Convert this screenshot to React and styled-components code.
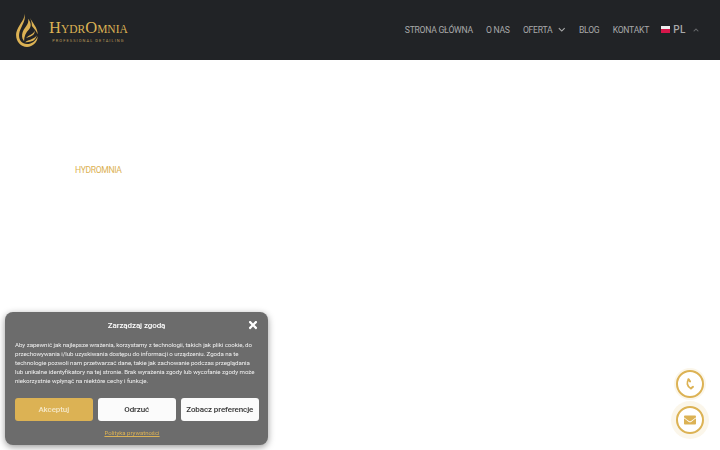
import React from "react"
import styled, { createGlobalStyle } from "styled-components"
import { FaEnvelope, FaChevronDown, FaChevronUp, FaTimes } from "react-icons/fa"

const gold = "#dcb254"

const Global = createGlobalStyle`
  html, body { margin: 0; padding: 0; background: #fff; }
  body { font-family: Roboto, "Liberation Sans", sans-serif; width: 720px; height: 450px; overflow: hidden; }
  * { box-sizing: border-box; }
`

const Header = styled.header`
  height: 60px;
  background: #212326;
  display: flex;
  align-items: center;
  justify-content: space-between;
  padding: 0 21px 0 15px;
`

const Brand = styled.div`
  display: flex;
  align-items: center;
  gap: 10px;
`

const BrandText = styled.div`
  display: flex;
  flex-direction: column;
  align-items: center;
  color: ${gold};
  margin-top: 3px;
`

const BrandName = styled.div`
  font-family: "Liberation Serif", serif;
  line-height: 15px;
  white-space: nowrap;
  b { font-weight: 400; font-size: 16.5px; }
  small { font-size: 11.5px; }
`

const BrandSub = styled.div`
  font-size: 4px;
  line-height: 6px;
  letter-spacing: 1.05px;
  margin-top: 1px;
  white-space: nowrap;
  color: #b9995a;
`

const Nav = styled.nav`
  display: flex;
  align-items: center;
  color: #a8a9aa;
  font-size: 8.6px;
  letter-spacing: -0.25px;
  margin-top: -1px;
`

const NavItem = styled.a`
  display: flex;
  align-items: center;
  gap: 6px;
  margin-right: 13.2px;
  white-space: nowrap;
  svg { font-size: 7.5px; }
`

const Lang = styled.div`
  display: flex;
  align-items: center;
  gap: 3px;
  font-size: 10px;
  font-weight: 500;
  letter-spacing: 0.5px;
  margin-left: -1px;
`

const Flag = styled.span`
  width: 9px;
  height: 7px;
  display: block;
  background: linear-gradient(#eeeeee 50%, #d6164a 50%);
`

const Caret = styled(FaChevronUp)`
  font-size: 6px;
  margin-left: 4px;
  color: #66686a;
`

const Main = styled.main`
  padding: 104px 75px 0;
`

const Crumb = styled.a`
  display: block;
  color: ${gold};
  font-size: 8.6px;
  letter-spacing: -0.35px;
  line-height: 12px;
`

const Consent = styled.div`
  position: fixed;
  left: 5px;
  bottom: 5px;
  width: 263px;
  height: 133px;
  background: #6c6c6c;
  border-radius: 8px;
  box-shadow: 0 2px 7px rgba(0, 0, 0, 0.4);
  padding: 0 10px;
  color: #fff;
`

const ConsentHead = styled.div`
  height: 26px;
  display: flex;
  align-items: center;
  justify-content: center;
  position: relative;
  font-size: 8px;
  letter-spacing: -0.1px;
  font-weight: 500;
`

const Close = styled(FaTimes)`
  position: absolute;
  right: -1px;
  top: 7px;
  font-size: 12px;
`

const ConsentText = styled.p`
  margin: 3px 0 0;
  font-size: 6.15px;
  letter-spacing: -0.05px;
  line-height: 9px;
  height: 45px;
  color: #f0f0f0;
  white-space: nowrap;
`

const Actions = styled.div`
  display: grid;
  grid-template-columns: repeat(3, 77.5px);
  gap: 5.5px;
  margin-top: 12px;
`

const Action = styled.button`
  height: 23px;
  border: 0;
  border-radius: 3px;
  padding: 0;
  font-family: inherit;
  font-size: 8px;
  letter-spacing: -0.1px;
  font-weight: 500;
  background: ${p => (p.$accept ? gold : "#fbfbfb")};
  color: ${p => (p.$accept ? "#f4e6c4" : "#333")};
`

const Policy = styled.a`
  display: block;
  text-align: center;
  margin-top: 7px;
  padding-right: 9px;
  font-size: 6px;
  line-height: 9px;
  color: ${gold};
  text-decoration: underline;
`

const Floats = styled.div`
  position: fixed;
  right: 16px;
  bottom: 16px;
  display: flex;
  flex-direction: column;
  gap: 8px;
`

const FloatBtn = styled.a`
  width: 28px;
  height: 28px;
  border-radius: 50%;
  border: 2px solid ${gold};
  background: #fff;
  color: ${gold};
  display: flex;
  align-items: center;
  justify-content: center;
  font-size: ${p => p.$size}px;
  box-shadow: 0 0 0 ${p => p.$halo}px rgba(220, 178, 84, 0.12);
`

const Drop = () => (
  <svg width="24" height="34" viewBox="0 0 24 35" fill={gold}>
    <path d="M9 0C11 6 3 12 1 20C-.5 28 5 35 12 35C18 35 23 30 23 24C21 29 17 32 12 32C6 32 3 27 4 21C5 14 12 8 9 0Z" />
    <path d="M13 6C15 12 8 15 7 22C6.5 26 8 28 9 29C9 24 11 20 14 17C17 14 16 9 13 6Z" />
    <path d="M15 5C18 11 23 15 23 22C21 17 18 15 17 13C17 10 16 7 15 5Z" />
    <path d="M20 18C19 22 14 22 11 26C15 24 20 24 20 18Z" />
    <path d="M22 23C20 27 15 27 10 30C15 30.5 21 29 22 23Z" />
  </svg>
)

const Handset = () => (
  <svg width="10" height="12" viewBox="0 0 10 12" fill="none" stroke={gold} strokeLinecap="round">
    <path d="M3.6 1.6C1.4 4 1.8 8 5.6 10.4" strokeWidth="1.7" />
    <path d="M3.4 1.2L5 3.4" strokeWidth="2" />
    <path d="M6 10.4L8 8.8" strokeWidth="2" />
  </svg>
)

export default function App() {
  return (
    <>
      <Global />
      <Header>
        <Brand>
          <Drop />
          <BrandText>
            <BrandName>
              <b>H</b><small>YDR</small><b>O</b><small>MNIA</small>
            </BrandName>
            <BrandSub>PROFESSIONAL DETAILING</BrandSub>
          </BrandText>
        </Brand>
        <Nav>
          <NavItem>STRONA GŁÓWNA</NavItem>
          <NavItem>O NAS</NavItem>
          <NavItem>OFERTA <FaChevronDown /></NavItem>
          <NavItem>BLOG</NavItem>
          <NavItem>KONTAKT</NavItem>
          <Lang>
            <Flag />
            PL
            <Caret />
          </Lang>
        </Nav>
      </Header>
      <Main>
        <Crumb>HYDROMNIA</Crumb>
      </Main>
      <Consent>
        <ConsentHead>
          Zarządzaj zgodą
          <Close />
        </ConsentHead>
        <ConsentText>
          Aby zapewnić jak najlepsze wrażenia, korzystamy z technologii, takich jak pliki cookie, do<br />
          przechowywania i/lub uzyskiwania dostępu do informacji o urządzeniu. Zgoda na te<br />
          technologie pozwoli nam przetwarzać dane, takie jak zachowanie podczas przeglądania<br />
          lub unikalne identyfikatory na tej stronie. Brak wyrażenia zgody lub wycofanie zgody może<br />
          niekorzystnie wpłynąć na niektóre cechy i funkcje.
        </ConsentText>
        <Actions>
          <Action $accept>Akceptuj</Action>
          <Action>Odrzuć</Action>
          <Action>Zobacz preferencje</Action>
        </Actions>
        <Policy>Polityka prywatności</Policy>
      </Consent>
      <Floats>
        <FloatBtn $size={9} $halo={2}><Handset /></FloatBtn>
        <FloatBtn $size={12} $halo={5}><FaEnvelope /></FloatBtn>
      </Floats>
    </>
  )
}
